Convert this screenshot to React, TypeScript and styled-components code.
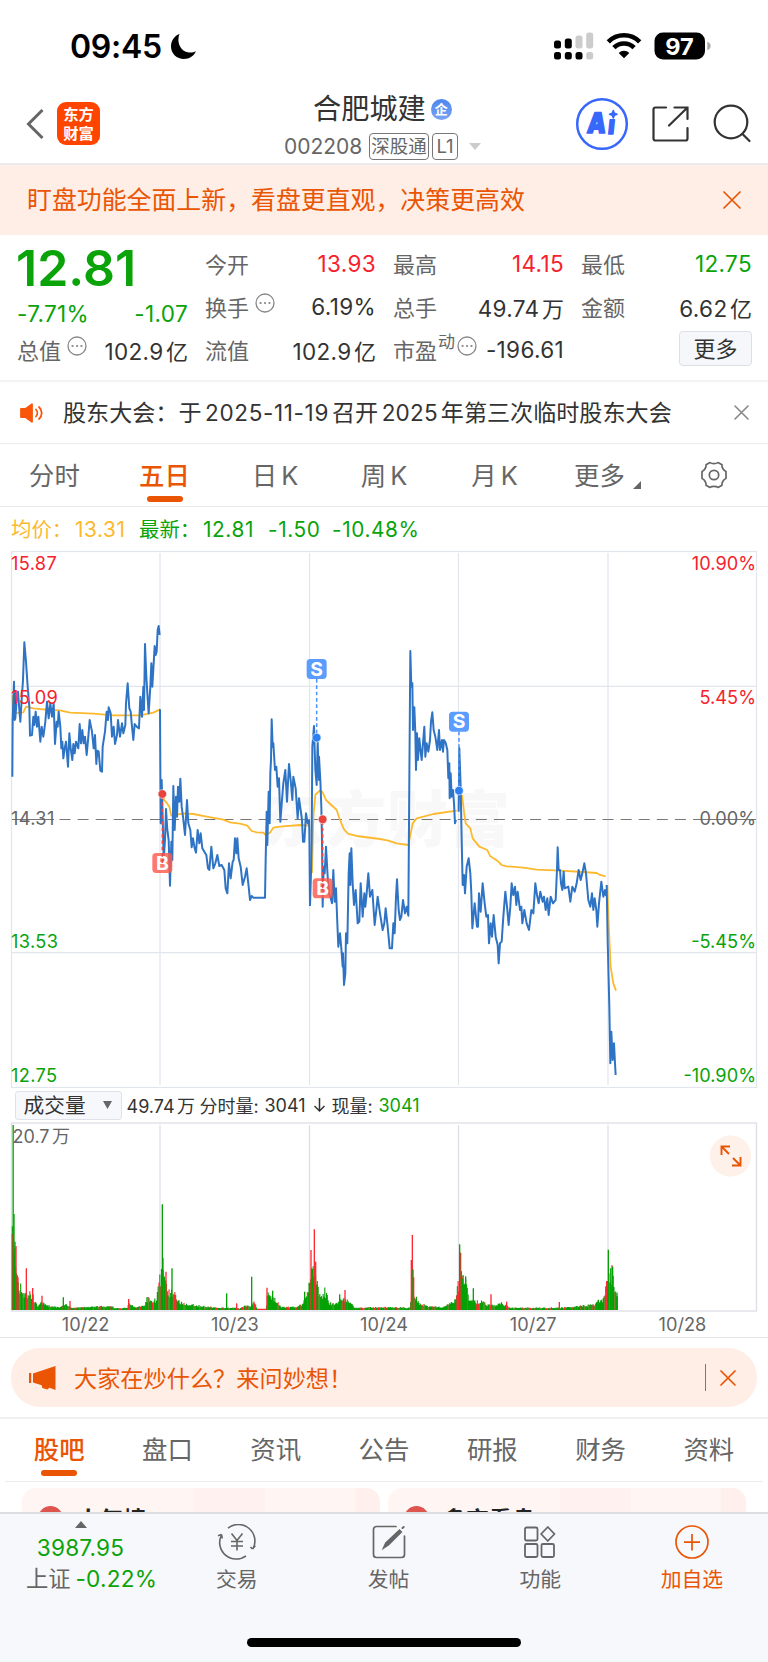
import React from "react";
import styled, { createGlobalStyle } from "styled-components";

const ORANGE = "#ea5504";
const GREEN = "#0aa30a";
const RED = "#f5222d";
const INK = "#333";
const GREY = "#666";

const Global = createGlobalStyle`
  * { box-sizing: border-box; }
  body {
    margin: 0;
    background: #fff;
    color: ${INK};
    font-family: Inter, "Noto Sans CJK SC", sans-serif;
    -webkit-font-smoothing: antialiased;
  }
  svg { display: block; flex: none; }
`;

const Page = styled.div`
  width: 768px;
  height: 1662px;
  display: flex;
  flex-direction: column;
  overflow: hidden;
  background: #fff;
`;

/* ---------- status bar ---------- */
const StatusBar = styled.div`
  height: 82px;
  flex: none;
  display: flex;
  align-items: center;
  padding: 10px 57px 0 70px;
`;
const Clock = styled.span`
  font-size: 32px;
  font-weight: 600;
  color: #000;
  letter-spacing: -0.3px;
  margin-right: 8px;
`;
const Spacer = styled.div`
  flex: 1;
`;

/* ---------- header ---------- */
const Header = styled.header`
  height: 83px;
  flex: none;
  display: flex;
  align-items: flex-start;
  border-bottom: 2px solid #ececee;
  padding: 0 15px 0 26px;
`;
const HeaderSide = styled.div<{ $w: number }>`
  width: ${(p) => p.$w}px;
  display: flex;
  align-items: flex-start;
  padding-top: 15px;
`;
const Logo = styled.div`
  width: 43px;
  height: 43px;
  margin: 5px 0 0 13px;
  border-radius: 9px;
  background: #ff4400;
  color: #fff;
  font-family: "Noto Sans CJK SC", sans-serif;
  font-size: 15.3px;
  font-weight: 700;
  display: flex;
  flex-direction: column;
  align-items: center;
  padding-top: 2px;
  & span { height: 19px; line-height: 19px; }
`;
const HeaderMain = styled.div`
  flex: 1;
  display: flex;
  flex-direction: column;
`;
const NameRow = styled.div`
  display: flex;
  align-items: center;
  height: 40px;
  margin-top: 7px;
  padding-left: 29px;
  font-size: 28.2px;
  line-height: 40px;
`;
const Badge = styled.span`
  width: 21px;
  height: 21px;
  margin-left: 5px;
  border-radius: 50%;
  background: linear-gradient(#4d86ee, #7aa3f2);
  color: #fff;
  font-size: 13px;
  font-weight: 700;
  line-height: 20px;
  text-align: center;
`;
const CodeRow = styled.div`
  display: flex;
  align-items: center;
  height: 28px;
  margin-top: 3px;
  color: ${GREY};
  font-size: 21px;
`;
const Tag = styled.span<{ $w: number }>`
  width: ${(p) => p.$w}px;
  height: 27px;
  margin-right: 3px;
  border: 1.5px solid #777;
  border-radius: 4px;
  font-size: 18.5px;
  line-height: 24px;
  text-align: center;
`;

/* ---------- notices ---------- */
const Banner = styled.div`
  height: 70px;
  flex: none;
  display: flex;
  align-items: center;
  justify-content: space-between;
  padding: 0 27px 0 27px;
  background: #feeee6;
  color: ${ORANGE};
  font-size: 24.9px;
  & span { padding-bottom: 4px; }
`;
const Notice = styled.div`
  height: 62px;
  flex: none;
  display: flex;
  align-items: center;
  padding: 0 19px 0 20px;
  border-bottom: 1px solid #ececee;
  font-size: 23.1px;
  white-space: pre;
`;
const NoticeText = styled.span`
  margin-left: 19px;
  padding-bottom: 4px;
`;
const Figure = styled.i<{ $ls: number }>`
  font-style: normal;
  font-size: 22.5px;
  margin: 0 3px 0 3.5px;
  letter-spacing: ${(p) => p.$ls}px;
`;

/* ---------- quote ---------- */
const Quote = styled.section`
  height: 147px;
  flex: none;
  display: flex;
  gap: 17px;
  padding: 7px 15px 0 17px;
  border-bottom: 2px solid #f3f3f5;
`;
const QuoteCol = styled.div`
  width: 171px;
  display: flex;
  flex-direction: column;
`;
const Price = styled.div`
  height: 48px;
  margin: 0 0 5px -1px;
  color: ${GREEN};
  font-size: 50px;
  font-weight: 600;
  line-height: 52px;
`;
const Cell = styled.div<{ $c?: string; $h?: number }>`
  height: ${(p) => p.$h ?? 43}px;
  display: flex;
  align-items: center;
  justify-content: space-between;
  color: ${(p) => p.$c ?? INK};
  font-size: 22.5px;
  letter-spacing: 0.35px;
  white-space: nowrap;
`;
const Label = styled.span`
  display: flex;
  align-items: center;
  padding-bottom: 2px;
  color: ${GREY};
  font-size: 22px;
  letter-spacing: 0;
  & svg { margin: -6px 0 0 6px; }
  & sup { font-size: 17px; line-height: 17px; margin: -12px -4px 0 1px; }
`;
const Unit = styled.span`
  margin-left: 2.5px;
  font-size: 22px;
  letter-spacing: 0;
`;
const SmallUnit = styled.span`
  margin-left: 2.5px;
`;
const MoreButton = styled.button`
  width: 73px;
  height: 35px;
  margin: -2px 0 0 auto;
  padding: 0;
  border: 1.5px solid #dcdfe5;
  border-radius: 4px;
  background: #f6f7fa;
  color: ${INK};
  font: 22px/30px Inter, "Noto Sans CJK SC", sans-serif;
`;

/* ---------- tabs ---------- */
const Tabs = styled.nav`
  height: 63px;
  flex: none;
  display: flex;
  padding: 0 39px 0 0;
  border-bottom: 1px solid #e9e9ec;
  align-items: center;
`;
const Tab = styled.div<{ $w: number; $on?: boolean }>`
  width: ${(p) => p.$w}px;
  height: 61px;
  display: flex;
  flex-direction: column;
  align-items: center;
  padding-top: 10px;
  font-size: 25.4px;
  line-height: 41px;
  white-space: nowrap;
  color: ${(p) => (p.$on ? ORANGE : GREY)};
  font-weight: ${(p) => (p.$on ? 500 : 400)};
  &::after {
    content: "";
    width: 36px;
    height: 6px;
    border-radius: 3px;
    background: ${(p) => (p.$on ? ORANGE : "transparent")};
  }
`;
const TabText = styled.span`
  display: flex;
  gap: 4px;
`;
const Corner = styled.svg`
  margin: 26px -14px 0 0;
`;

/* ---------- chart ---------- */
const Legend = styled.div`
  height: 33px;
  flex: none;
  display: flex;
  align-items: center;
  padding: 12px 0 0 11px;
  font-size: 20.4px;
  line-height: 21px;
  color: ${GREEN};
  white-space: nowrap;
`;
const LegendItem = styled.span<{ $w: number; $c?: string; $num?: boolean }>`
  width: ${(p) => p.$w}px;
  color: ${(p) => p.$c ?? GREEN};
  font-size: ${(p) => (p.$num ? 20.8 : 20.4)}px;
  letter-spacing: ${(p) => (p.$num ? 0.6 : 0)}px;
`;
const ChartSvg = styled.svg`
  font-family: Inter, "Noto Sans CJK SC", sans-serif;
  font-size: 18.2px;
`;
const VolumeHead = styled.div`
  height: 34px;
  flex: none;
  display: flex;
  align-items: center;
  padding: 0 0 0 14.5px;
  font-size: 18px;
  white-space: nowrap;
`;
const Select = styled.div`
  width: 107px;
  height: 29px;
  display: flex;
  align-items: center;
  justify-content: space-between;
  padding: 0 9px 0 8px;
  margin-right: 5px;
  border: 1.5px solid #dfe2e8;
  border-radius: 3px;
  background: #f7f8fb;
  font-size: 20.7px;
  line-height: 25px;
`;
const VolumeItem = styled.span<{ $w: number; $c?: string }>`
  width: ${(p) => p.$w}px;
  color: ${(p) => p.$c ?? INK};
`;
const Dates = styled.div`
  height: 26px;
  flex: none;
  display: flex;
  padding: 2px 11px 0;
  border-bottom: 1px solid #e6e6e9;
  color: ${GREY};
  font-size: 18.2px;
  line-height: 20px;
  & span { flex: 1; text-align: center; }
`;

/* ---------- prompt ---------- */
const Prompt = styled.div`
  height: 59px;
  flex: none;
  display: flex;
  align-items: center;
  margin: 10px 11px;
  padding: 0 21px 0 18px;
  border-radius: 29px;
  background: #feeee6;
  color: ${ORANGE};
  font-size: 23.2px;
`;
const PromptText = styled.span`
  flex: 1;
  margin-left: 17px;
  padding-bottom: 2px;
`;
const Divider = styled.span`
  width: 1.5px;
  height: 27px;
  margin-right: 14px;
  background: ${ORANGE};
`;
const Section = styled.section`
  height: 65px;
  flex: none;
  padding: 0 5px;
  border-top: 2px solid #f0f0f2;
`;
const SectionTabs = styled.nav`
  height: 63px;
  display: flex;
  border-bottom: 1.5px solid #ececee;
`;
const Cards = styled.div`
  height: 30px;
  flex: none;
  display: flex;
  gap: 8px;
  padding: 6px 22px 0;
  overflow: hidden;
`;
const Card = styled.div`
  flex: 1;
  height: 80px;
  display: flex;
  align-items: flex-start;
  border-radius: 14px;
  overflow: hidden;
  background: linear-gradient(90deg, #fff6f3 0 48%, #fff1ef 48% 68%, #fff5f2 68% 93%, #ffefed 93%);
  padding: 18px 0 0 16px;
`;
const Dot = styled.span`
  width: 25px;
  height: 25px;
  border-radius: 50%;
  background: #de5550;
`;
const CardTitle = styled.span`
  margin-left: 14px;
  margin-top: 1px;
  font-size: 23px;
  font-weight: 700;
  line-height: 26px;
  color: #222;
`;

/* ---------- bottom bar ---------- */
const Bottom = styled.footer`
  height: 150px;
  flex: none;
  display: flex;
  flex-direction: column;
  align-items: center;
  border-top: 2px solid #dcdee2;
  background: #f7f8fb;
`;
const Actions = styled.div`
  width: 768px;
  height: 124px;
  display: flex;
`;
const IndexCell = styled.div`
  width: 161px;
  display: flex;
  flex-direction: column;
  align-items: center;
  padding-top: 7px;
  font-size: 22.6px;
  letter-spacing: 0.2px;
  line-height: 31px;
  color: ${GREEN};
  & svg { margin-bottom: 4px; }
  & em { font-style: normal; font-size: 22.3px; letter-spacing: 0; color: ${GREY}; margin-right: 5px; }
`;
const IndexLine = styled.div<{ $x: number }>`
  display: flex;
  padding-left: ${(p) => p.$x}px;
  white-space: nowrap;
`;
const Action = styled.div<{ $on?: boolean }>`
  width: 151.7px;
  display: flex;
  flex-direction: column;
  align-items: center;
  padding-top: 10px;
  font-size: 20.8px;
  line-height: 30px;
  color: ${(p) => (p.$on ? ORANGE : GREY)};
  & span { margin-top: 5px; }
`;
const HomeBar = styled.div`
  width: 274px;
  height: 9px;
  border-radius: 5px;
  background: #000;
`;

const Cross = ({ size, color, w = 1.7 }: { size: number; color: string; w?: number }) => (
  <svg width={size} height={size} viewBox={`0 0 ${size} ${size}`} stroke={color} strokeWidth={w} strokeLinecap="round">
    <path d={`M1 1L${size - 1} ${size - 1}M${size - 1} 1L1 ${size - 1}`} />
  </svg>
);
const Info = () => (
  <svg width="20" height="20" viewBox="0 0 20 20" fill="none" stroke="#888" strokeWidth="1.3">
    <circle cx="10" cy="10" r="9" />
    <path d="M5.5 10h.1M10 10h.1M14.4 10h.1" strokeWidth="2.2" strokeLinecap="round" />
  </svg>
);

/* Series are kept in thirds of a pixel. */
const PRICE = [
  "37,710 38,540 42,425 44,540 46,535 50,480 54,455 58,510 61,545 65,480 69,420 73,307 78,365 83,440 88,500 90,587 96,585 100,530 103,555 107,515 111,560 115,530 121,605 125,560 130,590 136,545 141,485 146,535 151,490 156,530 161,490 165,612 170,545 173,560 176,515 181,560 184,625 187,605 190,655 194,625 198,605 204,680 208,580 212,625 217,660 220,612 224,640 228,605 235,625 239,552 243,610 247,570 251,610 255,590 260,645 265,590 269,540 276,575 281,625 285,585 289,672 292,632 296,635 301,692 306,695 308,620 315,575 320,515 324,540 326,502 332,520 336,590 341,560 345,612 351,585 354,540 360,590 366,550 370,580 376,555 378,490 383,430 388,505 392,515 396,560 400,600 404,552 410,560 417,565 421,470 426,530 430,440 432,510 435,312 439,410 442,460 446,520 451,440 454,370 457,440 461,370 464,318 467,345 470,335 473,270 476,258 479,285",
  "480,508 482,850 485,720 489,870 491,960 495,900 498,807 502,870 506,900 510,1037 514,905 517,960 520,738 524,870 528,770 531,830 534,740 538,785 541,716 545,800 549,830 555,885 561,780 565,850 571,870 575,922 579,895 584,925 588,938 593,870 598,910 602,880 607,925 613,935 619,945 624,985 628,990 634,920 640,985 646,970 652,945 658,978 665,975 673,990 677,1045 682,1060 687,970 692,1015 698,965 701,960 705,895 709,940 712,895 716,955 722,980 728,1035 735,1010 740,985 746,1040 750,1080 755,1068 760,1073 795,1073 797,960 800,815 802,915 806,755 809,850 811,700 813,660 815,538 818,620 820,610 825,690 829,680 833,740 837,715 841,845 846,780 850,730 856,690 861,785 867,672 872,720 877,780 880,710 887,745 893,835 897,775 902,810 906,840 909,905 913,905 918,820 923,850 927,840 928,870 930,1098",
  "930,1098 933,1000 935,900 937,620 942,558 946,690 950,735 953,605 957,720 957,650 961,720 964,800 966,900 968,1100 971,980 974,1000 978,920 983,1010 987,1060 991,1070 996,1090 1000,990 1004,1085 1008,1045 1012,1150 1015,1220 1020,1180 1024,1225 1028,1280 1029,1240 1032,1335 1036,1300 1038,1180 1042,1210 1046,1000 1049,940 1051,1035 1054,925 1058,1030 1062,1095 1067,1050 1070,1100 1073,1150 1078,1145 1082,1030 1088,1130 1093,1060 1096,1100 1100,1060 1105,1000 1110,1070 1117,1050 1124,1155 1130,1100 1133,1070 1140,1120 1148,1170 1153,1150 1157,1105 1163,1160 1169,1225 1176,1225 1180,1150 1184,1180 1188,1070 1191,1018 1196,1110 1200,1140 1204,1130 1209,1080 1215,1120 1220,1100 1225,1127 1228,720 1231,333 1234,440 1237,430 1239,570 1243,502 1246,580 1248,690 1251,580 1254,660 1258,595 1261,625 1265,660 1269,610 1273,560 1276,650 1280,610 1285,635 1290,600 1293,545 1297,517 1301,570 1306,590 1312,630 1317,570 1320,630 1326,600 1329,635 1332,600 1337,608 1342,630 1345,715 1348,670 1349,775 1352,700 1355,770 1359,750 1362,790 1365,850 1368,840",
  "1376,815 1378,625 1382,740 1384,850 1388,1035 1392,1005 1395,1060 1400,980 1406,955 1411,1000 1414,1060 1417,1165 1424,1090 1431,1160 1434,1160 1437,1060 1442,1115 1448,1030 1454,1090 1459,1130 1464,1125 1467,1210 1472,1150 1476,1190 1481,1125 1487,1190 1493,1215 1496,1270 1500,1210 1505,1205 1510,1130 1516,1055 1521,1100 1526,1155 1531,1100 1535,1030 1540,1065 1545,1040 1549,1095 1553,1055 1560,1110 1564,1100 1567,1150 1573,1110 1580,1150 1587,1170 1594,1110 1600,1120 1606,1030 1611,1065 1616,1090 1621,1055 1628,1085 1632,1070 1637,1110 1642,1075 1646,1125 1652,1070 1659,1090 1667,1080 1671,990 1673,922 1676,990 1680,990 1683,1030 1687,1050 1691,995 1694,1045 1705,1040 1711,1085 1717,1040 1724,1055 1730,1030 1736,990 1742,1020 1747,1000 1753,970 1758,1000 1765,1080 1771,1100 1776,1060 1780,1110 1784,1075 1789,1110 1792,1160 1797,1090 1804,1025 1810,1070 1815,1050 1818,1068",
  "1820,1035 1823,1200 1828,1400 1831,1570 1834,1475 1838,1560 1842,1510 1845,1570 1847,1605",
];
const AVERAGE = [
  "37,465 39,520 70,517 78,500 100,505 150,510 180,511 210,518 280,521 340,526 420,526 460,518 480,508",
  "485,740 489,760 492,780 500,788 508,800 514,827 525,825 550,820 580,822 620,830 670,839 690,847 720,851 742,857 755,873 770,877 790,878 797,885 810,878 820,863 840,860 900,855 928,857",
  "936,1000 940,830 946,765 960,751 968,757 978,780 1010,810 1020,840 1032,868 1045,882 1070,888 1140,897 1165,902 1190,910 1225,915 1232,880 1238,850 1250,835 1300,822 1370,812",
  "1386,765 1392,815 1397,850 1411,865 1418,895 1438,920 1462,930 1470,948 1492,962 1505,975 1520,979 1570,983 1610,989 1680,992 1750,996 1790,999 1800,1005 1817,1009",
  "1822,1035 1826,1150 1832,1280 1840,1330 1848,1352",
];
const DAY_LINES = [160, 309.5, 458.5, 608];

type Mark = { x: number; from: number; dot: number; box: number; kind: "B" | "S" };
const MARKS: Mark[] = [
  { x: 487, from: 969, dot: 762, box: 969, kind: "B" },
  { x: 968, from: 1045, dot: 838, box: 1045, kind: "B" },
  { x: 950, from: 417, dot: 593, box: 387, kind: "S" },
  { x: 1377, from: 575, dot: 752, box: 545, kind: "S" },
];

const PriceChart = () => (
  <ChartSvg width="768" height="548" viewBox="0 0 768 548">
    <text x="263" y="302" fontSize="61" fontWeight="900" fill="#f8f8f8" letterSpacing="1">东方财富</text>
    <g fill="none" stroke="#e2e5ec" strokeWidth="1.2">
      <rect x="11.5" y="11.5" width="745" height="536" />
      {DAY_LINES.map((x) => (
        <path key={x} d={`M${x} 13V545`} />
      ))}
      <path d="M12 146.3H756M12 412.6H756" />
    </g>
    <path d="M59.500 279.5H706" stroke="#777" strokeWidth="1.2" strokeDasharray="11 7.1" />
    <path d="M12 279.5H54M702 279.5H756" stroke="#777" strokeWidth="1.2" />
    <g transform="scale(.33333)" fill="none" strokeLinejoin="round">
      {AVERAGE.map((p) => (
        <polyline key={p} points={p} stroke="#fdb92e" strokeWidth="5.4" />
      ))}
      {PRICE.map((p) => (
        <polyline key={p} points={p} stroke="#2f74c4" strokeWidth="6" />
      ))}
      {MARKS.map((m) => {
        const c = m.kind === "B" ? "#e8433c" : "#2b7ff5";
        return (
          <g key={m.x}>
            <rect x={m.x - 30} y={m.box - 30} width="60" height="60" rx="11" fill={m.kind === "B" ? "#ff5a4c" : "#5b9dff"} fillOpacity={m.kind === "B" ? 0.82 : 1} />
            <text x={m.x} y={m.box + 20} fontSize="58" fontWeight="700" fill="#fff" textAnchor="middle">{m.kind}</text>
            <path d={`M${m.x} ${m.from}V${m.dot}`} stroke={m.kind === "B" ? "#e5484d" : "#4a92ff"} strokeWidth="4.5" strokeDasharray="11 8" />
            <circle cx={m.x} cy={m.dot} r="13" fill={c} stroke="#fff" strokeOpacity=".7" strokeWidth="2.5" />
          </g>
        );
      })}
    </g>
    <g fill={RED}>
      <text x="11" y="29.5" letterSpacing=".35">15.87</text>
      <text x="11" y="163.5" letterSpacing=".35">15.09</text>
      <text x="756" y="29.5" textAnchor="end">10.90%</text>
      <text x="756" y="163.5" textAnchor="end">5.45%</text>
    </g>
    <g fill={GREY}>
      <text x="11" y="285" letterSpacing=".35">14.31</text>
      <text x="756" y="285" textAnchor="end">0.00%</text>
    </g>
    <g fill={GREEN}>
      <text x="11" y="407.5" letterSpacing=".35">13.53</text>
      <text x="11" y="541.5" letterSpacing=".35">12.75</text>
      <text x="756" y="407.5" textAnchor="end">-5.45%</text>
      <text x="756" y="541.5" textAnchor="end">-10.90%</text>
    </g>
  </ChartSvg>
);

const ENVELOPE: [number, number][] = [
  [37, 200], [48, 120], [54, 70], [64, 65], [72, 45], [80, 45], [95, 45], [105, 25], [115, 10], [125, 20], [140, 12], [180, 6], [195, 15], [215, 5], [300, 9], [330, 9], [350, 4], [380, 5], [390, 20], [405, 6], [430, 10], [445, 34], [455, 20], [470, 32], [478, 80], [485, 110], [495, 95], [503, 50], [520, 50], [540, 22], [555, 15], [600, 11], [650, 5], [690, 6], [720, 4], [735, 12], [752, 10], [765, 22], [772, 2], [797, 2], [805, 50], [825, 32], [845, 7], [890, 8], [905, 14], [920, 35], [930, 80], [940, 110], [950, 90], [960, 34], [975, 52], [990, 17], [1015, 20], [1030, 34], [1050, 20], [1065, 5], [1150, 7], [1200, 6], [1230, 6], [1236, 60], [1245, 42], [1260, 17], [1280, 11], [1300, 9], [1330, 7], [1350, 17], [1362, 20], [1375, 70], [1385, 95], [1400, 65], [1410, 23], [1440, 23], [1465, 14], [1480, 11], [1500, 20], [1530, 6], [1600, 5], [1700, 6], [1780, 14], [1800, 24], [1812, 36], [1822, 90], [1835, 105], [1845, 58], [1853, 45],
];
const SPIKES: [number, number, 0 | 1][] = [
  [37, 228, 1], [39.5, 555, 0], [42, 288, 0], [45, 205, 0], [48, 192, 1], [54, 98, 1], [79, 125, 1], [98, 66, 1], [126, 43, 1], [190, 38, 0], [210, 27, 1], [386, 33, 1], [441, 38, 0], [489, 157, 1], [487, 317, 0], [498, 115, 1], [493, 100, 0], [516, 125, 0], [680, 50, 0], [710, 20, 1], [755, 100, 0], [801, 67, 1], [818, 58, 0], [914, 55, 0], [933, 180, 1], [943, 242, 1], [947, 145, 1], [935, 125, 0], [1019, 47, 0], [1035, 60, 1], [1234, 150, 1], [1237, 225, 1], [1239, 122, 0], [1241, 98, 1], [1382, 172, 1], [1379, 197, 0], [1388, 93, 0], [1397, 101, 0], [1420, 65, 0], [1473, 47, 1], [1520, 25, 1], [1678, 24, 1], [1795, 31, 0], [1820, 87, 1], [1825, 181, 0], [1836, 134, 1], [1838, 130, 0], [1851, 52, 0],
];
const BASE = 564;
const noise = (n: number) => {
  const v = Math.sin(n * 12.9898) * 43758.5453;
  return v - Math.floor(v);
};
const volumeBars = () => {
  const up: string[] = [];
  const down: string[] = [];
  let seg = 0;
  for (let x = 37; x <= 1854; x += 2.5) {
    while (seg < ENVELOPE.length - 2 && ENVELOPE[seg + 1][0] < x) seg++;
    const [x0, h0] = ENVELOPE[seg];
    const [x1, h1] = ENVELOPE[seg + 1];
    const h = (h0 + ((h1 - h0) * (x - x0)) / (x1 - x0)) * (0.7 + 0.6 * noise(x)) + 1;
    const halted = x > 770 && x < 798;
    (halted || noise(x + 7) > 0.75 ? up : down).push(`M${x} ${BASE}v${-Math.max(h, 4).toFixed(1)}`);
  }
  return [up.join(""), down.join("")];
};
const [UP, DOWN] = volumeBars();

const VolumeChart = () => (
  <ChartSvg width="768" height="190" viewBox="0 0 768 190">
    <g fill="none" stroke="#dcdfe6" strokeWidth="1.3">
      <rect x="11.5" y="1" width="745" height="188" />
      {DAY_LINES.map((x) => (
        <path key={x} d={`M${x} 3V188`} />
      ))}
    </g>
    <text x="12.5" y="20.5" fontSize="18" fill={GREY}>20.7<tspan dx="2.5">万</tspan></text>
    <g transform="scale(.33333)" strokeWidth="3.4">
      <path d={UP} stroke="#fb2a33" />
      <path d={DOWN} stroke="#05a005" />
      {SPIKES.map(([x, h, up]) => (
        <path key={x} d={`M${x} ${BASE}V${BASE - h}`} stroke={up ? "#fb2a33" : "#05a005"} strokeWidth="4" />
      ))}
    </g>
    <circle cx="730.5" cy="34" r="20.7" fill="#fef1ea" />
    <path d="M729 32l-7.5-7.5M721.5 33v-8.5h8.5M733 36l7.5 7.5M740.5 35v8.500h-8.500" fill="none" stroke={ORANGE} strokeWidth="1.9" />
  </ChartSvg>
);

const StatusIcons = () => (
  <svg width="158" height="28" viewBox="552 31.500 158 28">
    <g fill="#000">
      <rect x="553" y="40" width="7" height="8" rx="2.500" />
      <rect x="563.800" y="38" width="7" height="10" rx="2.500" />
      <rect x="553" y="51.500" width="7" height="7.500" rx="2.500" />
      <rect x="563.800" y="51.500" width="7" height="7.500" rx="2.500" />
      <rect x="574.500" y="51.500" width="7" height="7.500" rx="2.500" />
    </g>
    <g fill="#ccc">
      <rect x="574.500" y="35" width="7" height="13" rx="2.500" />
      <rect x="585.200" y="32" width="7" height="16" rx="2.500" />
      <rect x="585.200" y="51.500" width="7" height="7.500" rx="2.500" />
    </g>
    <g fill="none" stroke="#000" strokeWidth="4.600">
      <path d="M607.300 41.300a22 22 0 0 1 31.400 0" />
      <path d="M612.900 47.200a14.400 14.400 0 0 1 20.200 0" />
    </g>
    <path d="M617.700 52.500a7.500 7.500 0 0 1 10.600 0L623 57.700z" fill="#000" />
    <rect x="653.500" y="32" width="50.500" height="27" rx="8.500" fill="#000" />
    <path d="M706.300 41.300c4.500 1.200 4.500 7.200 0 8.400z" fill="#aaa" />
    <text x="678.500" y="54" fontFamily="Inter, sans-serif" fontSize="23.500" fontWeight="700" fill="#fff" textAnchor="middle">97</text>
  </svg>
);

const HeaderIcons = () => (
  <svg width="178" height="54" viewBox="574 97 178 54" fill="none" stroke="#333" strokeWidth="2.200" strokeLinecap="round">
    <circle cx="601" cy="124" r="24.800" stroke="#3767fb" strokeWidth="2.500" />
    <g fill="#3767fb" stroke="#3767fb" strokeWidth="1.600" strokeLinejoin="round" fontFamily="Inter, sans-serif" fontWeight="900" fontSize="28">
      <text transform="translate(585.500 133) skewX(-6) scale(.84 1)">A</text>
      <text transform="translate(606.500 133.500) skewX(-6) scale(.84 1)" fontSize="26">ı</text>
      <path d="M612.300 110.500l1.100 2.700 2.600 1-2.600 1-1.100 2.700-1.100-2.700-2.600-1 2.600-1z" />
    </g>
    <path d="M665 107.500h-10.500a2 2 0 0 0-2 2v29a2 2 0 0 0 2 2h30a2 2 0 0 0 2-2V128M673.500 107.500h13v11.500M686 108l-18 17.500" />
    <circle cx="730" cy="122" r="16.300" />
    <path d="M742 134.500l6.500 6.500" />
  </svg>
);

const BackIcon = styled.svg`
  margin-top: 11px;
`;

const Gear = () => (
  <svg width="30" height="30" viewBox="0 0 30 30" fill="none" stroke="#666" strokeWidth="1.700" strokeLinejoin="round">
    <path d="M11 2.500c1.500 1.600 6.500 1.600 8 0l4 2.300c-.6 2.200 1.800 6 4 6.700v7c-2.200.6-4.600 4.400-4 6.700l-4 2.300c-1.500-1.600-6.500-1.600-8 0l-4-2.300c.6-2.200-1.800-6-4-6.700v-7c2.200-.6 4.600-4.400 4-6.700z" />
    <circle cx="15" cy="15" r="4.700" />
  </svg>
);

const CHART_TABS: [string, string, number, boolean][] = [
  ["分时", "", 109, false],
  ["五日", "", 111, true],
  ["日", "K", 110, false],
  ["周", "K", 108, false],
  ["月", "K", 113, false],
];

export default function App() {
  return (
    <Page>
      <Global />
      <StatusBar>
        <Clock>09:45</Clock>
        <svg width="27" height="27" viewBox="0 0 27 27">
          <path d="M9.500 1C6.500 8 9.500 18.500 19 19.500c2.500.3 5-.2 7-1.200C23.500 23.500 19 26 14 26 6.800 26 1 20.500 1 13.500 1 7.500 4.500 2.800 9.500 1z" fill="#000" />
        </svg>
        <Spacer />
        <StatusIcons />
      </StatusBar>

      <Header>
        <HeaderSide $w={258}>
          <BackIcon width="18" height="32" viewBox="0 0 18 32" fill="none" stroke="#666" strokeWidth="3">
            <path d="M16.500 2L2.500 16l14 14" />
          </BackIcon>
          <Logo><span>东方</span><span>财富</span></Logo>
        </HeaderSide>
        <HeaderMain>
          <NameRow>合肥城建<Badge>企</Badge></NameRow>
          <CodeRow>
            <VolumeItem $w={85} $c={GREY}>002208</VolumeItem>
            <Tag $w={60}>深股通</Tag>
            <Tag $w={26}>L1</Tag>
            <svg width="20" height="7" viewBox="0 0 20 7"><path d="M8 0h12l-6 7z" fill="#ccc" /></svg>
          </CodeRow>
        </HeaderMain>
        <HeaderSide $w={178}><HeaderIcons /></HeaderSide>
      </Header>

      <Banner>
        <span>盯盘功能全面上新，看盘更直观，决策更高效</span>
        <Cross size={18} color={ORANGE} />
      </Banner>

      <Quote>
        <QuoteCol>
          <Price>12.81</Price>
          <Cell $c={GREEN} $h={36}><span>-7.71%</span><span>-1.07</span></Cell>
          <Cell $h={37}><Label>总值<Info /></Label><span>102.9<Unit>亿</Unit></span></Cell>
        </QuoteCol>
        <QuoteCol>
          <Cell $c={RED}><Label>今开</Label>13.93</Cell>
          <Cell><Label>换手<Info /></Label>6.19%</Cell>
          <Cell><Label>流值</Label><span>102.9<Unit>亿</Unit></span></Cell>
        </QuoteCol>
        <QuoteCol>
          <Cell $c={RED}><Label>最高</Label>14.15</Cell>
          <Cell><Label>总手</Label><span>49.74<Unit>万</Unit></span></Cell>
          <Cell><Label>市盈<sup>动</sup><Info /></Label>-196.61</Cell>
        </QuoteCol>
        <QuoteCol>
          <Cell $c={GREEN}><Label>最低</Label>12.75</Cell>
          <Cell><Label>金额</Label><span>6.62<Unit>亿</Unit></span></Cell>
          <Cell><MoreButton>更多</MoreButton></Cell>
        </QuoteCol>
      </Quote>

      <Notice>
        <svg width="24" height="20" viewBox="0 0 24 20" fill="none" stroke="#f9560c" strokeWidth="1.800" strokeLinecap="round">
          <path d="M1 6h4.500L12 1.200v17.600L5.500 14H1z" fill="#f9560c" strokeLinejoin="round" />
          <path d="M16 6.500c1.800 2 1.800 5 0 7M19 4c3.600 3.400 3.600 8.600 0 12" />
        </svg>
        <NoticeText>股东大会：于<Figure $ls={0.65}>2025-11-19</Figure>召开<Figure $ls={0.2}>2025</Figure>年第三次临时股东大会</NoticeText>
        <Spacer />
        <Cross size={15} color="#888" w={1.600} />
      </Notice>

      <Tabs>
        {CHART_TABS.map(([a, b, w, on]) => (
          <Tab key={a} $w={w} $on={on}>
            <TabText>{a}{b && <span>{b}</span>}</TabText>
          </Tab>
        ))}
        <Tab $w={101}>
          <TabText>
            更多
            <Corner width="14" height="8" viewBox="0 0 14 8"><path d="M12 0v8H4z" fill="#666" /></Corner>
          </TabText>
        </Tab>
        <Spacer />
        <Gear />
      </Tabs>

      <Legend>
        <LegendItem $w={64} $c="#fdb92e">均价：</LegendItem>
        <LegendItem $w={64} $c="#fdb92e" $num>13.31</LegendItem>
        <LegendItem $w={64}>最新：</LegendItem>
        <LegendItem $w={65} $num>12.81</LegendItem>
        <LegendItem $w={64} $num>-1.50</LegendItem>
        <LegendItem $w={90} $num>-10.48%</LegendItem>
      </Legend>
      <PriceChart />

      <VolumeHead>
        <Select>
          成交量
          <svg width="9" height="8" viewBox="0 0 9 8"><path d="M0 0h9L4.500 8z" fill="#666" /></svg>
        </Select>
        <VolumeItem $w={73}>49.74<SmallUnit>万</SmallUnit></VolumeItem>
        <VolumeItem $w={65}>分时量:</VolumeItem>
        <VolumeItem $w={49}>3041</VolumeItem>
        <svg width="18" height="16" viewBox="0 0 18 16" fill="none" stroke="#333" strokeWidth="1.500"><path d="M5.500 1v13M.5 9l5 5 5-5" /></svg>
        <VolumeItem $w={47}>现量:</VolumeItem>
        <VolumeItem $w={50} $c={GREEN}>3041</VolumeItem>
      </VolumeHead>
      <VolumeChart />
      <Dates>
        <span>10/22</span><span>10/23</span><span>10/24</span><span>10/27</span><span>10/28</span>
      </Dates>

      <Prompt>
        <svg width="28" height="24" viewBox="0 0 28 24" fill={ORANGE}>
          <path d="M0 7h2.200v10H0zM4 7.500L26.500 0v24l-6-2.200-2.200 1.700-5-1.500-.6-2.700L4 16.500z" />
        </svg>
        <PromptText>大家在炒什么？来问妙想！</PromptText>
        <Divider />
        <Cross size={16} color={ORANGE} />
      </Prompt>

      <Section>
        <SectionTabs>
          {["股吧", "盘口", "资讯", "公告", "研报", "财务", "资料"].map((t, i) => (
            <Tab key={t} $w={108.300} $on={i === 0}>{t}</Tab>
          ))}
        </SectionTabs>
      </Section>
      <Cards>
        <Card><Dot /><CardTitle>人气榜</CardTitle></Card>
        <Card><Dot /><CardTitle>多空看盘</CardTitle></Card>
      </Cards>

      <Bottom>
        <Actions>
          <IndexCell>
            <svg width="12" height="7" viewBox="0 0 12 7"><path d="M0 7h12L6 0z" fill="#666" /></svg>
            <IndexLine $x={0}>3987.95</IndexLine>
            <IndexLine $x={22}><em>上证</em>-0.22%</IndexLine>
          </IndexCell>
          <Action>
            <svg width="40" height="36" viewBox="0 0 40 36" fill="none" stroke="#666" strokeWidth="1.600">
              <path d="M11 4.200a16.500 16.500 0 0 1 25 20.500M35.500 25l2.800-3.300M35.500 25l-2-2M29 31.800A16.500 16.500 0 0 1 4.500 11M4.500 10.500l-3.500 1.300M4.500 10.500l.8 4" />
              <path d="M14.500 9.500l5.500 7 5.500-7M20 16.500v10M14 17.500h12M14 22h12" />
            </svg>
            <span>交易</span>
          </Action>
          <Action>
            <svg width="36" height="36" viewBox="0 0 36 36" fill="none" stroke="#666" strokeWidth="1.700" strokeLinecap="round">
              <path d="M25 2.500H5.500a3 3 0 0 0-3 3v25a3 3 0 0 0 3 3h25a3 3 0 0 0 3-3V12" />
              <path d="M13 23.500l2-4.500L28.500 6.500l1.500 1.500-12.500 12.500zM31.500 4l1.200-1" fill="#666" strokeWidth="2" />
            </svg>
            <span>发帖</span>
          </Action>
          <Action>
            <svg width="36" height="36" viewBox="0 0 36 36" fill="none" stroke="#666" strokeWidth="1.800" strokeLinejoin="round">
              <rect x="3" y="3.500" width="12.500" height="13" rx="1.500" />
              <rect x="3" y="20" width="12.500" height="13" rx="1.500" />
              <rect x="19.500" y="20" width="12.500" height="13" rx="1.500" />
              <path d="M25.800 3l6.700 7-6.700 7-6.700-7z" />
            </svg>
            <span>功能</span>
          </Action>
          <Action $on>
            <svg width="36" height="36" viewBox="0 0 36 36" fill="none" stroke={ORANGE} strokeWidth="1.700">
              <circle cx="18" cy="18" r="16" />
              <path d="M18 10v16.500M10 18.200h16" />
            </svg>
            <span>加自选</span>
          </Action>
        </Actions>
        <HomeBar />
      </Bottom>
    </Page>
  );
}
